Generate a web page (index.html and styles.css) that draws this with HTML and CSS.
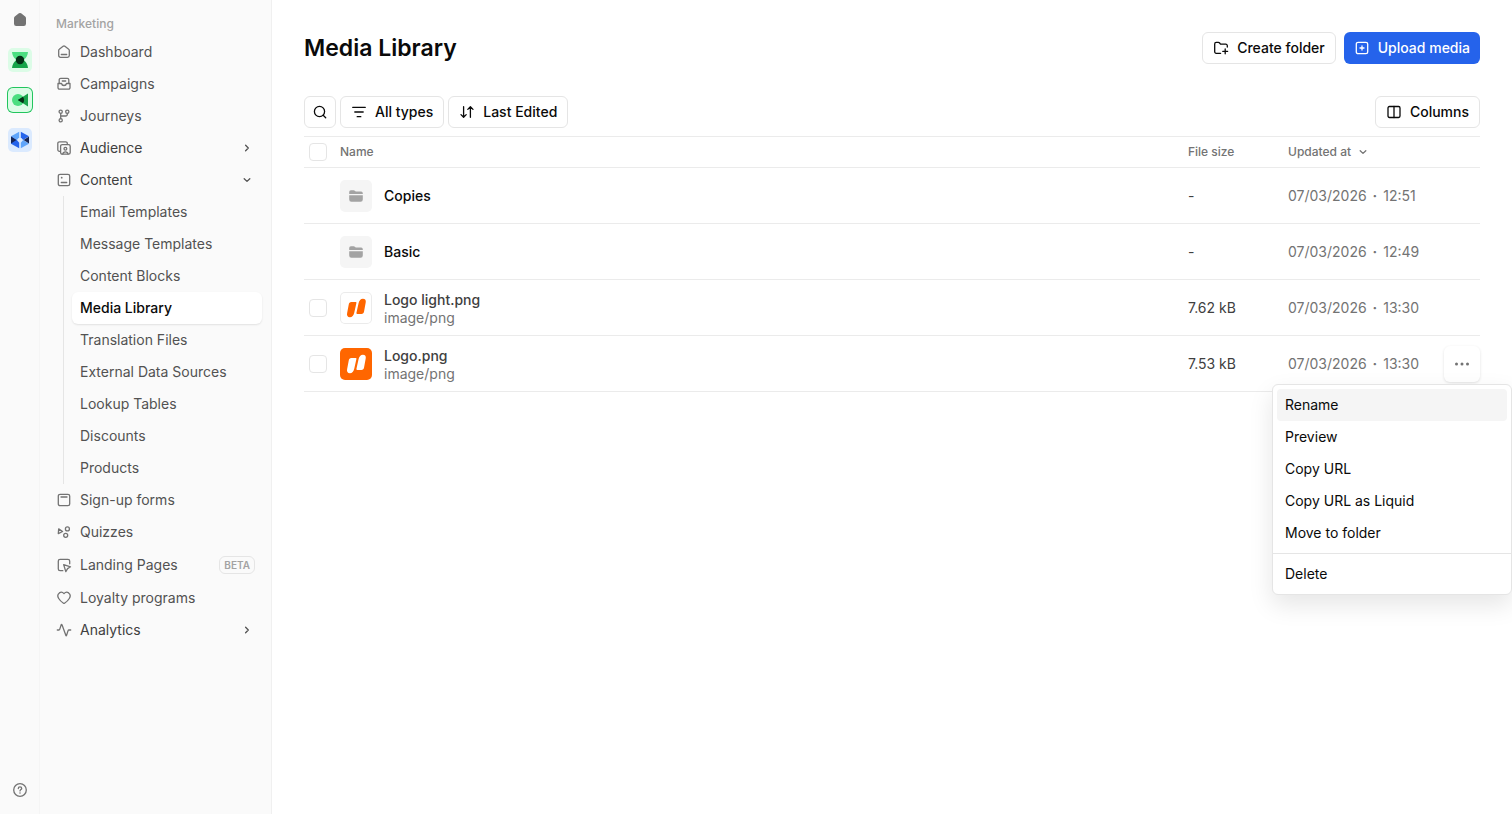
FILE: index.html
```html
<!DOCTYPE html>
<html lang="en">
<head>
<meta charset="utf-8">
<meta name="viewport" content="width=device-width, initial-scale=1">
<title>Media Library</title>
<link rel="stylesheet" href="styles.css">
</head>
<body>
<div class="app">
  <nav class="rail" aria-label="Products">
    <a class="rail-link" href="#" aria-label="Home">
      <svg class="icon" viewBox="0 0 16 16"><path class="solid" d="M6.900 1.300a1.800 1.800 0 0 1 2.200 0l4.100 3.300c.5.4.8 1 .8 1.600v5.600a2.200 2.200 0 0 1-2.200 2.200H4.200A2.200 2.200 0 0 1 2 11.800V6.200c0-.6.3-1.200.8-1.600z"/></svg>
    </a>
    <a class="rail-link" href="#" aria-label="Customers">
      <span class="tile tile-green"><svg class="logo" viewBox="0 0 24 24"><path fill="#4ade80" d="M4 4h16c-.3 3.500-2 6.500-4.500 8h-7C6 10.500 4.300 7.500 4 4z"/><path fill="#16a34a" d="M4 20h16c-.3-3.500-2-6.500-4.500-8h-7C6 13.500 4.300 16.500 4 20z"/><circle cx="12" cy="12" r="4.200" fill="#052e16"/></svg></span>
    </a>
    <a class="rail-link" href="#" aria-label="Marketing" aria-current="true">
      <span class="tile tile-green tile-active"><svg class="logo" viewBox="0 0 24 24"><circle cx="10" cy="12" r="6" fill="#4ade80"/><path fill="#16a34a" d="M20 5.500v13L9.800 12z"/><path fill="#052e16" d="M15 8.700A6 6 0 0 1 15 15.300L9.800 12z"/></svg></span>
    </a>
    <a class="rail-link" href="#" aria-label="Data">
      <span class="tile tile-blue"><svg class="logo" viewBox="0 0 24 24"><path fill="#60a5fa" d="M11.200 3.800v5.400L8.800 12 3 8.300z"/><path fill="#2563eb" d="M3 8.300 8.800 12l2.400 2.800v5.400L3 15.700z"/><path fill="#172554" d="M3 8.600 8.400 12 3 15.400z"/><path fill="#2563eb" d="M12.800 3.800v5.400l2.400 2.800L21 8.300z"/><path fill="#60a5fa" d="M21 15.700 15.200 12l-2.400 2.800v5.400z"/><path fill="#172554" d="M21 8.600 15.600 12l5.400 3.400z"/></svg></span>
    </a>
    <a class="rail-link rail-help" href="#" aria-label="Help">
      <svg class="icon" viewBox="0 0 16 16"><circle cx="8" cy="8" r="6.300"/><path d="M6.300 6.500c0-1 .7-1.600 1.700-1.600s1.700.6 1.700 1.500c0 1.200-1.700 1.200-1.700 2.500"/><circle class="solid" cx="8" cy="10.900" r=".75"/></svg>
    </a>
  </nav>

  <nav class="sidebar" aria-label="Marketing">
    <h2 class="sidebar-title">Marketing</h2>
    <a class="nav-item" href="#"><svg class="icon" viewBox="0 0 16 16"><path d="M7.100 2.300a1.500 1.500 0 0 1 1.800 0l3.800 3c.4.3.6.7.6 1.200v5.100a1.800 1.800 0 0 1-1.800 1.800h-7a1.800 1.800 0 0 1-1.800-1.800V6.500c0-.5.2-.9.6-1.200zM5.300 10.500h5.400"/></svg>Dashboard</a>
    <a class="nav-item" href="#"><svg class="icon" viewBox="0 0 16 16"><path d="M3.200 7.300V3.800a1.500 1.500 0 0 1 1.500-1.500h6.600a1.500 1.500 0 0 1 1.500 1.500v3.500M6.300 5h3.400M2 7.500h3.500c.3 1.400 1.200 2 2.500 2s2.200-.6 2.500-2H14v4.200a1.500 1.500 0 0 1-1.500 1.500h-9A1.500 1.500 0 0 1 2 11.700z"/></svg>Campaigns</a>
    <a class="nav-item" href="#"><svg class="icon" viewBox="0 0 16 16"><circle cx="4.700" cy="3.700" r="1.600"/><circle cx="11.300" cy="3.700" r="1.600"/><circle cx="4.700" cy="12.300" r="1.600"/><path d="M4.700 5.300v5.400M11.300 5.300v1.200A1.500 1.500 0 0 1 9.800 8H4.700"/></svg>Journeys</a>
    <a class="nav-item nav-strong" href="#"><svg class="icon" viewBox="0 0 16 16"><rect x="4.600" y="4.600" width="9.600" height="9.600" rx="1.600"/><path d="M4.300 11.300H3.400a1.600 1.600 0 0 1-1.600-1.600V3.400a1.600 1.600 0 0 1 1.600-1.600h6.300a1.600 1.600 0 0 1 1.600 1.600v.9M6.800 14c.2-1.500 1.200-2.200 2.600-2.200s2.400.7 2.600 2.200"/><circle cx="9.400" cy="8.700" r="1.400"/></svg>Audience<svg class="icon chevron" viewBox="0 0 16 16"><path d="m6.600 5.300 2.700 2.700-2.700 2.700"/></svg></a>
    <a class="nav-item nav-strong" href="#" aria-expanded="true"><svg class="icon" viewBox="0 0 16 16"><rect x="2.300" y="2.300" width="11.400" height="11.400" rx="1.800"/><circle class="solid" cx="5.700" cy="5.700" r=".9"/><path d="M5.300 10.500h5.400"/></svg>Content<svg class="icon chevron" viewBox="0 0 16 16"><path d="M5.200 6.700 8 9.400l2.800-2.700"/></svg></a>
    <div class="subnav">
      <a class="sub-item" href="#">Email Templates</a>
      <a class="sub-item" href="#">Message Templates</a>
      <a class="sub-item" href="#">Content Blocks</a>
      <a class="sub-item sub-active" href="#" aria-current="page">Media Library</a>
      <a class="sub-item" href="#">Translation Files</a>
      <a class="sub-item" href="#">External Data Sources</a>
      <a class="sub-item" href="#">Lookup Tables</a>
      <a class="sub-item" href="#">Discounts</a>
      <a class="sub-item" href="#">Products</a>
    </div>
    <a class="nav-item" href="#"><svg class="icon" viewBox="0 0 16 16"><rect x="2.300" y="2.300" width="11.400" height="11.400" rx="1.800"/><path d="M5 5h6"/></svg>Sign-up forms</a>
    <a class="nav-item" href="#"><svg class="icon" viewBox="0 0 16 16"><path d="M2.700 4.900 2.300 9.600l4.300-2.100z"/><circle cx="11.400" cy="4.900" r="2"/><circle cx="9.700" cy="11.300" r="2"/></svg>Quizzes</a>
    <a class="nav-item nav-tall" href="#"><svg class="icon" viewBox="0 0 16 16"><path d="M13.700 6.800V4.100a1.800 1.800 0 0 0-1.800-1.800H4.100a1.800 1.800 0 0 0-1.800 1.800v7.800a1.800 1.800 0 0 0 1.800 1.800h2.700M7.700 7.700l6.800 2.100-2.900 1.800-1.800 3z"/></svg>Landing Pages<span class="badge">BETA</span></a>
    <a class="nav-item" href="#"><svg class="icon" viewBox="0 0 16 16"><path d="M8 3.600C6.700 2.200 4.800 1.900 3.400 2.900 1.700 4.200 1.500 6.600 2.700 8.500 3.900 10.400 6 12.300 7.500 13.300a1 1 0 0 0 1 0c1.500-1 3.600-2.900 4.800-4.800 1.200-1.900 1-4.300-.7-5.600C11.200 1.900 9.300 2.200 8 3.600z"/></svg>Loyalty programs</a>
    <a class="nav-item nav-strong" href="#"><svg class="icon" viewBox="0 0 16 16"><path d="M1.300 8h1.600c.4 0 .7-.2.800-.6L5.300 2.500c.1-.3.500-.3.600 0l4 11c.1.300.5.300.6 0l1.600-4.900c.1-.4.500-.6.900-.6h1.700"/></svg>Analytics<svg class="icon chevron" viewBox="0 0 16 16"><path d="m6.600 5.300 2.700 2.700-2.700 2.700"/></svg></a>
  </nav>

  <main class="main">
    <header class="page-head">
      <h1 class="title">Media Library</h1>
      <div class="actions">
        <button class="btn" type="button"><svg class="icon" viewBox="0 0 16 16"><path d="M7.600 13.300H3.200a1.500 1.500 0 0 1-1.500-1.500V3.900a1.500 1.500 0 0 1 1.500-1.500h2.200c.5 0 .9.200 1.200.6l.9 1.200h5.300a1.500 1.500 0 0 1 1.500 1.500V7M12.200 9v4.800M9.800 11.400h4.800"/></svg>Create folder</button>
        <button class="btn btn-primary" type="button"><svg class="icon" viewBox="0 0 16 16"><rect x="2.300" y="2.300" width="11.400" height="11.400" rx="1.800"/><path d="M8 6v4M6 8h4"/></svg>Upload media</button>
      </div>
    </header>

    <div class="toolbar">
      <button class="btn btn-icon" type="button" aria-label="Search"><svg class="icon" viewBox="0 0 16 16"><circle cx="7.500" cy="7.500" r="5.100"/><path d="m11.200 11.200 2.500 2.500"/></svg></button>
      <button class="btn" type="button"><svg class="icon" viewBox="0 0 16 16"><path d="M1.700 3.300h12.600M3.800 8h8.400M6.200 12.700h3.600"/></svg>All types</button>
      <button class="btn" type="button"><svg class="icon" viewBox="0 0 16 16"><path d="M4.600 2.700v10.200M2 10.600l2.600 2.600 2.600-2.600M11.400 13.300V3.100M8.800 5.400l2.600-2.600L14 5.400"/></svg>Last Edited</button>
      <button class="btn btn-end" type="button"><svg class="icon" viewBox="0 0 16 16"><rect x="2" y="2.500" width="12" height="11" rx="1.400"/><path d="M8 2.500v11"/></svg>Columns</button>
    </div>

    <table class="files">
      <thead>
        <tr>
          <th class="col-check"><input class="check" type="checkbox" aria-label="Select all"></th>
          <th>Name</th>
          <th class="col-size">File size</th>
          <th class="col-date"><button class="sort" type="button">Updated at<svg class="icon" viewBox="0 0 16 16"><path d="M5.200 6.700 8 9.400l2.800-2.700"/></svg></button></th>
          <th class="col-menu"></th>
        </tr>
      </thead>
      <tbody>
        <tr>
          <td></td>
          <td><div class="file"><span class="thumb thumb-folder"><svg class="icon" viewBox="0 0 16 16"><path class="solid" d="M1.200 5.900V4A1.700 1.700 0 0 1 2.900 2.300h2.700c.5 0 .9.200 1.300.5l.8.700h5.400a1.700 1.700 0 0 1 1.700 1.700v.7zM1.200 7.200h13.600v4.300a2.200 2.200 0 0 1-2.200 2.200H3.400a2.200 2.200 0 0 1-2.200-2.200z"/></svg></span><a class="folder-name" href="#">Copies</a></div></td>
          <td class="size">-</td>
          <td class="date">07/03/2026 <span class="dot">·</span> 12:51</td>
          <td></td>
        </tr>
        <tr>
          <td></td>
          <td><div class="file"><span class="thumb thumb-folder"><svg class="icon" viewBox="0 0 16 16"><path class="solid" d="M1.200 5.900V4A1.700 1.700 0 0 1 2.900 2.300h2.700c.5 0 .9.200 1.300.5l.8.700h5.400a1.700 1.700 0 0 1 1.700 1.700v.7zM1.200 7.200h13.600v4.300a2.200 2.200 0 0 1-2.200 2.200H3.400a2.200 2.200 0 0 1-2.200-2.200z"/></svg></span><a class="folder-name" href="#">Basic</a></div></td>
          <td class="size">-</td>
          <td class="date">07/03/2026 <span class="dot">·</span> 12:49</td>
          <td></td>
        </tr>
        <tr>
          <td><input class="check" type="checkbox" aria-label="Select Logo light.png"></td>
          <td><div class="file"><span class="thumb thumb-light"><svg class="mark" viewBox="0 0 32 32"><path d="M11.400 10h4.300c.5 0 .8.400.7.900l-2.100 9.600c-.6 3-2.200 4.700-4.400 4.700-2.300 0-3.300-1.500-2.800-3.900l1.600-8.600c.3-1.800 1.100-2.700 2.700-2.700zM21.400 21.900h-4.300c-.5 0-.8-.4-.7-.9l2.100-9.600c.6-3 2.200-4.700 4.400-4.700 2.300 0 3.300 1.500 2.800 3.900l-1.600 8.600c-.3 1.800-1.100 2.700-2.700 2.700z"/></svg></span><div class="file-text"><span class="file-name">Logo light.png</span><span class="file-kind">image/png</span></div></div></td>
          <td class="size">7.62 kB</td>
          <td class="date">07/03/2026 <span class="dot">·</span> 13:30</td>
          <td></td>
        </tr>
        <tr>
          <td><input class="check" type="checkbox" aria-label="Select Logo.png"></td>
          <td><div class="file"><span class="thumb thumb-brand"><svg class="mark" viewBox="0 0 32 32"><path d="M11.400 10h4.300c.5 0 .8.400.7.900l-2.100 9.600c-.6 3-2.200 4.700-4.400 4.700-2.300 0-3.300-1.500-2.800-3.900l1.600-8.600c.3-1.800 1.100-2.700 2.700-2.700zM21.400 21.900h-4.300c-.5 0-.8-.4-.7-.9l2.100-9.600c.6-3 2.200-4.700 4.400-4.700 2.300 0 3.300 1.500 2.800 3.900l-1.600 8.600c-.3 1.800-1.100 2.700-2.700 2.700z"/></svg></span><div class="file-text"><span class="file-name">Logo.png</span><span class="file-kind">image/png</span></div></div></td>
          <td class="size">7.53 kB</td>
          <td class="date">07/03/2026 <span class="dot">·</span> 13:30</td>
          <td>
            <div class="menu-anchor">
              <button class="more" type="button" aria-label="More actions" aria-haspopup="menu" aria-expanded="true"><svg class="icon" viewBox="0 0 16 16"><circle class="solid" cx="2.500" cy="8" r="1.500"/><circle class="solid" cx="8" cy="8" r="1.500"/><circle class="solid" cx="13.500" cy="8" r="1.500"/></svg></button>
              <div class="menu" role="menu">
                <div class="menu-group">
                  <button class="menu-item menu-item-on" type="button" role="menuitem">Rename</button>
                  <button class="menu-item" type="button" role="menuitem">Preview</button>
                  <button class="menu-item" type="button" role="menuitem">Copy URL</button>
                  <button class="menu-item" type="button" role="menuitem">Copy URL as Liquid</button>
                  <button class="menu-item" type="button" role="menuitem">Move to folder</button>
                </div>
                <div class="menu-group">
                  <button class="menu-item" type="button" role="menuitem">Delete</button>
                </div>
              </div>
            </div>
          </td>
        </tr>
      </tbody>
    </table>
  </main>
</div>
</body>
</html>
```
FILE: styles.css
```css
* { box-sizing: border-box; }

body {
  margin: 0;
  font-family: Inter, "Liberation Sans", sans-serif;
  font-size: 14px;
  line-height: 20px;
  color: #0a0a0a;
  background: #fff;
}

a { color: inherit; text-decoration: none; }
button { font: inherit; color: inherit; cursor: pointer; }

.app { display: flex; min-height: 100vh; }

.icon {
  width: 16px;
  height: 16px;
  flex: none;
  display: block;
  fill: none;
  stroke: currentColor;
  stroke-width: 1.3;
  stroke-linecap: round;
  stroke-linejoin: round;
}
.solid { fill: currentColor; stroke: none; }

/* Product rail */
.rail {
  width: 40px;
  flex: none;
  display: flex;
  flex-direction: column;
  align-items: center;
  padding: 4px 0 8px;
  gap: 8px;
  background: #fafafa;
  border-right: 1px solid #f5f5f5;
  color: #737373;
}
.rail-link {
  width: 32px;
  height: 32px;
  display: grid;
  place-items: center;
}
.rail-help { margin-top: auto; }
.tile { width: 24px; height: 24px; border-radius: 5px; }
.tile-green { background: #dcfce7; }
.tile-blue { background: #dbeafe; }
.tile-active { box-shadow: 0 0 0 1px #22c55e; }
.logo { display: block; width: 24px; height: 24px; }

/* Section navigation */
.sidebar {
  width: 232px;
  flex: none;
  padding: 12px 8px;
  background: #fafafa;
  border-right: 1px solid #f0f0f0;
  color: #525252;
}
.sidebar-title {
  margin: 0;
  padding: 2px 8px;
  font-size: 12px;
  line-height: 20px;
  font-weight: 500;
  color: #a3a3a3;
}
.nav-item {
  display: flex;
  align-items: center;
  gap: 8px;
  height: 32px;
  padding: 0 8px;
}
.nav-item .icon { color: #737373; }
.nav-strong { color: #404040; }
.nav-item .chevron { color: #525252; }
.nav-tall { height: 34px; }
.chevron { margin-left: auto; }
.badge {
  margin-left: auto;
  padding: 0 4px;
  border: 1px solid #e5e5e5;
  border-radius: 6px;
  font-size: 10px;
  line-height: 16px;
  font-weight: 600;
  color: #a3a3a3;
}
.subnav { margin: 0 1px 0 15px; border-left: 1px solid #e5e5e5; padding-left: 8px; }
.sub-item {
  display: block;
  padding: 6px 8px;
  border-radius: 6px;
}
.sub-active {
  color: #0a0a0a;
  font-weight: 500;
  background: #fff;
  box-shadow: 0 1px 2px rgba(0, 0, 0, 0.1);
}

/* Page */
.main { flex: 1; min-width: 0; padding: 32px; }
.page-head { display: flex; align-items: center; justify-content: space-between; }
.title { margin: 0; font-size: 23px; line-height: 32px; font-weight: 600; }
.actions { display: flex; gap: 8px; }
.toolbar { display: flex; gap: 4px; margin: 32px 0 8px; }
.btn {
  display: flex;
  align-items: center;
  gap: 8px;
  height: 32px;
  padding: 0 10px;
  border: 1px solid #e5e5e5;
  border-radius: 6px;
  background: #fff;
  font-weight: 500;
}
.btn-icon { width: 32px; padding: 0; justify-content: center; }
.btn-primary { background: #2563eb; border: 0; color: #fff; }
.btn-end { margin-left: auto; }

/* File table */
.files { width: 100%; table-layout: fixed; border-spacing: 0; }
.files th, .files td { padding: 0; text-align: left; border-bottom: 1px solid #ebebeb; }
.files th {
  height: 32px;
  border-top: 1px solid #ebebeb;
  font-size: 12px;
  font-weight: 500;
  color: #737373;
}
.files td { height: 56px; }
.col-check { width: 36px; }
.col-size { width: 100px; }
.col-date { width: 156px; }
.col-menu { width: 36px; }
.sort {
  display: flex;
  align-items: center;
  gap: 4px;
  padding: 0;
  border: 0;
  background: none;
}
.check {
  appearance: none;
  display: block;
  width: 18px;
  height: 18px;
  margin: 0 0 0 5px;
  border: 1px solid #e5e5e5;
  border-radius: 4px;
  background: #fff;
}
.file { display: flex; align-items: center; gap: 12px; }
.thumb {
  width: 32px;
  height: 32px;
  flex: none;
  display: grid;
  place-items: center;
  border-radius: 5px;
}
.thumb-folder { background: #f5f5f5; color: #a3a3a3; }
.thumb-light { background: #fff; box-shadow: inset 0 0 0 1px #ebebeb; color: #ff6600; }
.thumb-brand { background: #ff6600; color: #fff; }
.mark { display: block; width: 32px; height: 32px; fill: currentColor; }
.folder-name { font-weight: 500; }
.file-text { display: flex; flex-direction: column; padding-top: 2px; line-height: 18px; }
.file-name { font-weight: 500; color: #404040; }
.file-kind { color: #737373; }
.size { color: #404040; }
.date { color: #737373; }
.dot { margin: 0 2px; font-weight: 700; }

/* Row menu */
.menu-anchor { position: relative; }
.more {
  display: grid;
  place-items: center;
  width: 36px;
  height: 36px;
  padding: 0;
  border: 0;
  border-radius: 6px;
  background: #fff;
  color: #737373;
  box-shadow: 0 1px 3px rgba(0, 0, 0, 0.12);
}
.menu {
  position: absolute;
  z-index: 1;
  top: 38px;
  right: -32px;
  width: 240px;
  border: 1px solid #e5e5e5;
  border-radius: 6px;
  background: #fff;
  box-shadow: 0 10px 24px rgba(0, 0, 0, 0.1);
}
.menu-group { padding: 4px; }
.menu-group + .menu-group { border-top: 1px solid #e5e5e5; }
.menu-item {
  display: block;
  width: 100%;
  height: 32px;
  padding: 0 8px;
  border: 0;
  border-radius: 4px;
  background: none;
  text-align: left;
}
.menu-item-on { background: #f5f5f5; }
```
